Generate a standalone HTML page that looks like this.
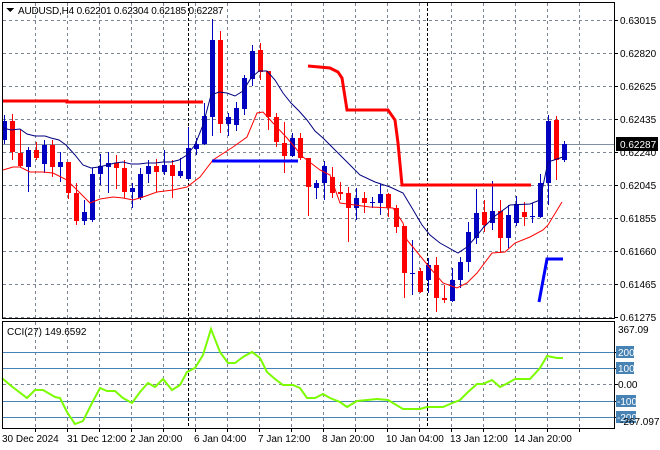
<!DOCTYPE html>
<html><head><meta charset="utf-8"><style>
html,body{margin:0;padding:0;background:#fff;width:660px;height:450px;overflow:hidden}
svg{display:block}
text{font-family:"Liberation Sans","DejaVu Sans",sans-serif;font-size:10px;fill:#000}
</style></head><body>
<svg id="s" width="660" height="450" xmlns="http://www.w3.org/2000/svg" shape-rendering="crispEdges">
<g id="grid" stroke="#7a8594" stroke-width="1" stroke-dasharray="3,3"></g>
<g id="lv" stroke="#4682b4" stroke-width="1">
<line x1="3" y1="352.5" x2="614" y2="352.5"/><line x1="3" y1="368.5" x2="614" y2="368.5"/>
<line x1="3" y1="401.5" x2="614" y2="401.5"/><line x1="3" y1="417.5" x2="614" y2="417.5"/>
</g>
<line x1="188.5" y1="3" x2="188.5" y2="428" stroke="#000" stroke-dasharray="3,2"/>
<line x1="427.5" y1="3" x2="427.5" y2="428" stroke="#000" stroke-dasharray="3,2"/>
<line x1="3" y1="144.5" x2="614" y2="144.5" stroke="#8090a0"/>
<g id="c"></g>
<g id="ln" fill="none" shape-rendering="auto"></g>
<g fill="none" stroke="#000" stroke-width="1">
<rect x="2.5" y="2.5" width="612" height="316"/>
<rect x="2.5" y="321.5" width="612" height="107"/>
</g>
<g id="ticks" stroke="#000"></g>
<polygon points="6,8 14,8 10,12" fill="#000"/>
<text x="18" y="14" style="letter-spacing:-0.2px">AUDUSD,H4  0.62201 0.62304 0.62185 0.62287</text>
<text x="7" y="335">CCI(27) 149.6592</text>
<g>
<text x="620" y="24">0.63015</text><text x="620" y="57">0.62820</text>
<text x="620" y="90">0.62625</text><text x="620" y="123">0.62435</text>
<text x="620" y="156">0.62240</text><text x="620" y="189">0.62045</text>
<text x="620" y="222">0.61855</text><text x="620" y="255">0.61660</text>
<text x="620" y="288">0.61465</text><text x="620" y="321">0.61275</text>
<rect x="616" y="137" width="42" height="14" fill="#000"/>
<text x="620" y="148" style="fill:#fff">0.62287</text>
<text x="618" y="333">367.09</text>
<rect x="616" y="346" width="18" height="12" fill="#4682b4"/><text x="618" y="356" style="fill:#fff">200</text>
<rect x="616" y="362" width="18" height="12" fill="#4682b4"/><text x="618" y="372" style="fill:#fff">100</text>
<text x="618" y="388">0.00</text>
<rect x="616" y="395" width="20" height="12" fill="#4682b4"/><text x="617" y="405" style="fill:#fff">-100</text>
<rect x="616" y="411" width="20" height="12" fill="#4682b4"/><text x="617" y="421" style="fill:#fff">-200</text>
<text x="620" y="425">-267.097</text>
</g>
<g>
<text x="2" y="442">30 Dec 2024</text><text x="67" y="442">31 Dec 12:00</text>
<text x="130" y="442">2 Jan 20:00</text><text x="194" y="442">6 Jan 04:00</text>
<text x="258" y="442">7 Jan 12:00</text><text x="322" y="442">8 Jan 20:00</text>
<text x="386" y="442">10 Jan 04:00</text><text x="450" y="442">13 Jan 12:00</text>
<text x="514" y="442">14 Jan 20:00</text>
</g>
</svg>
<script>
var NS="http://www.w3.org/2000/svg";
function el(p,n,a){var e=document.createElementNS(NS,n);for(var k in a)e.setAttribute(k,a[k]);p.appendChild(e);return e;}
var g=document.getElementById('grid');
var vx=[35,67,99,131,163,195,227,259,291,323,355,387,419,451,483,515,547,579];
vx.forEach(function(x){el(g,'line',{x1:x+.5,y1:3,x2:x+.5,y2:318});el(g,'line',{x1:x+.5,y1:322,x2:x+.5,y2:428});});
[20,53,86,119,152,185,218,251,284,317].forEach(function(y){el(g,'line',{x1:3,y1:y+.5,x2:614,y2:y+.5});});
el(g,'line',{x1:3,y1:384.5,x2:614,y2:384.5});
var t=document.getElementById('ticks');
vx.forEach(function(x){el(t,'line',{x1:x+.5,y1:429,x2:x+.5,y2:432});});
[20,53,86,119,152,185,218,251,284,317,352,368,384,401,417].forEach(function(y){el(t,'line',{x1:614,y1:y+.5,x2:618,y2:y+.5});});
var C=[
['b',121,140,115,144],['r',121,152,114,160],['r',153,166,130,167],['b',150,167,147,192],['r',150,158,142,160],
['b',145,164,140,173],['r',145,167,140,177],['b',162,167,152,182],['r',162,193,162,199],['r',193,221,183,225],
['b',212,221,200,225],['b',174,220,168,222],['b',166,174,154,185],['b',163,167,152,193],['r',163,168,155,189],
['r',168,192,160,198],['b',188,192,183,208],['b',174,198,168,200],['b',166,174,160,183],['r',166,172,159,192],
['b',165,172,150,175],['r',165,176,160,198],['b',171,176,158,178],['b',148,179,127,180],['b',144,149,138,155],
['b',116,144,103,145],['b',40,117,19,136],['r',40,124,31,133],['b',117,124,113,136],['b',108,125,102,131],
['b',78,109,75,115],['b',51,79,45,86],['r',50,72,43,80],['r',71,117,71,130],['r',117,142,113,147],
['r',143,156,122,173],['b',138,156,133,157],['r',138,158,133,160],['r',158,187,158,216],['b',183,188,180,199],
['b',166,183,161,200],['r',177,193,167,198],['r',192,194,182,200],['r',193,208,187,242],['b',198,208,188,220],
['r',198,203,192,213],['b',202,202,197,208],['b',194,203,184,215],['r',194,208,193,217],['r',208,227,205,233],
['r',226,273,226,298],['b',273,273,240,295],['r',271,292,268,293],['b',265,280,258,293],['r',265,298,257,312],
['r',298,300,285,303],['b',280,301,268,302],['b',262,280,257,288],['b',232,262,222,272],['b',213,238,189,244],
['r',212,225,200,232],['b',211,223,181,230],['r',211,238,200,253],['b',215,238,205,248],['b',204,223,196,226],
['r',212,217,202,226],['b',216,216,203,223],['b',183,217,174,218],['b',121,183,115,205],['r',120,160,116,180],
['b',144,160,141,162]];
var cg=document.getElementById('c');
C.forEach(function(d,i){var x=4+8*i;var col=d[0]=='b'?'#0000c0':'#ff0000';
el(cg,'rect',{x:x,y:d[3],width:1,height:d[4]-d[3],fill:col});
el(cg,'rect',{x:x-2,y:d[1],width:5,height:Math.max(1,d[2]-d[1]),fill:col});});
var L=document.getElementById('ln');
function pl(pts,c,w){el(L,'polyline',{points:pts,stroke:c,'stroke-width':w});}
pl("3,128 11,130 20,129 27,134 35,136 45,136 51,138 59,140 66,145 75,155 83,165 91,168 99,167 107,165 115,163 123,162 131,164 139,164 147,163 155,163 163,162 171,162 179,160 187,155 195,145 203,125 211,95 219,92 227,93 235,96 243,91 251,78 259,71 267,71 275,80 283,93 291,103 299,111 307,120 315,131 323,138 330,145 345,160 360,175 375,182 390,187 403,193 412,208 422,225 430,235 440,243 458,253 467,247 475,238 483,228 495,216 510,205 530,204 540,200 548,162 557,159 563,157","#000080",1);
pl("3,170 13,167 20,167 30,172 43,172 53,173 67,180 80,193 90,203 100,199 113,197 123,198 133,200 143,197 157,192 173,190 187,187 200,177 213,160 233,147 247,137 257,113 263,112 273,123 287,138 303,157 320,170 330,175 340,203 370,207 393,208 403,223 407,240 417,252 430,268 443,283 457,288 467,283 477,273 492,253 505,252 515,243 530,237 543,230 548,225 562,202","#ff0000",1);
pl("3,101 67,101 67,102 203,102","#ff0000",3);
pl("308,66 330,68 338,72 342,78 347,110 388,110 395,120 398,143 402,185 531,185","#ff0000",3);
pl("212,161 298,161","#0000ff",3);
pl("539,302 547,259 563,259","#0000ff",3);
pl("2,378 10,385 27,398 35,390 43,390 55,397 60,398 67,412 75,424 83,421 92,403 100,388 107,391 115,391 123,398 132,403 140,392 148,383 155,387 163,379 172,390 180,385 187,372 195,368 203,355 211,329 220,352 228,363 235,363 243,357 252,352 260,358 267,372 275,379 283,385 293,385 300,388 307,398 315,398 323,394 330,398 340,402 347,407 357,401 377,399 388,400 403,409 420,409 427,407 432,407 443,407 450,404 460,400 468,392 477,384 483,384 492,380 500,387 508,383 515,379 530,379 540,368 547,356 557,358 563,358","#7cfc00",2);
</script>
</body></html>
